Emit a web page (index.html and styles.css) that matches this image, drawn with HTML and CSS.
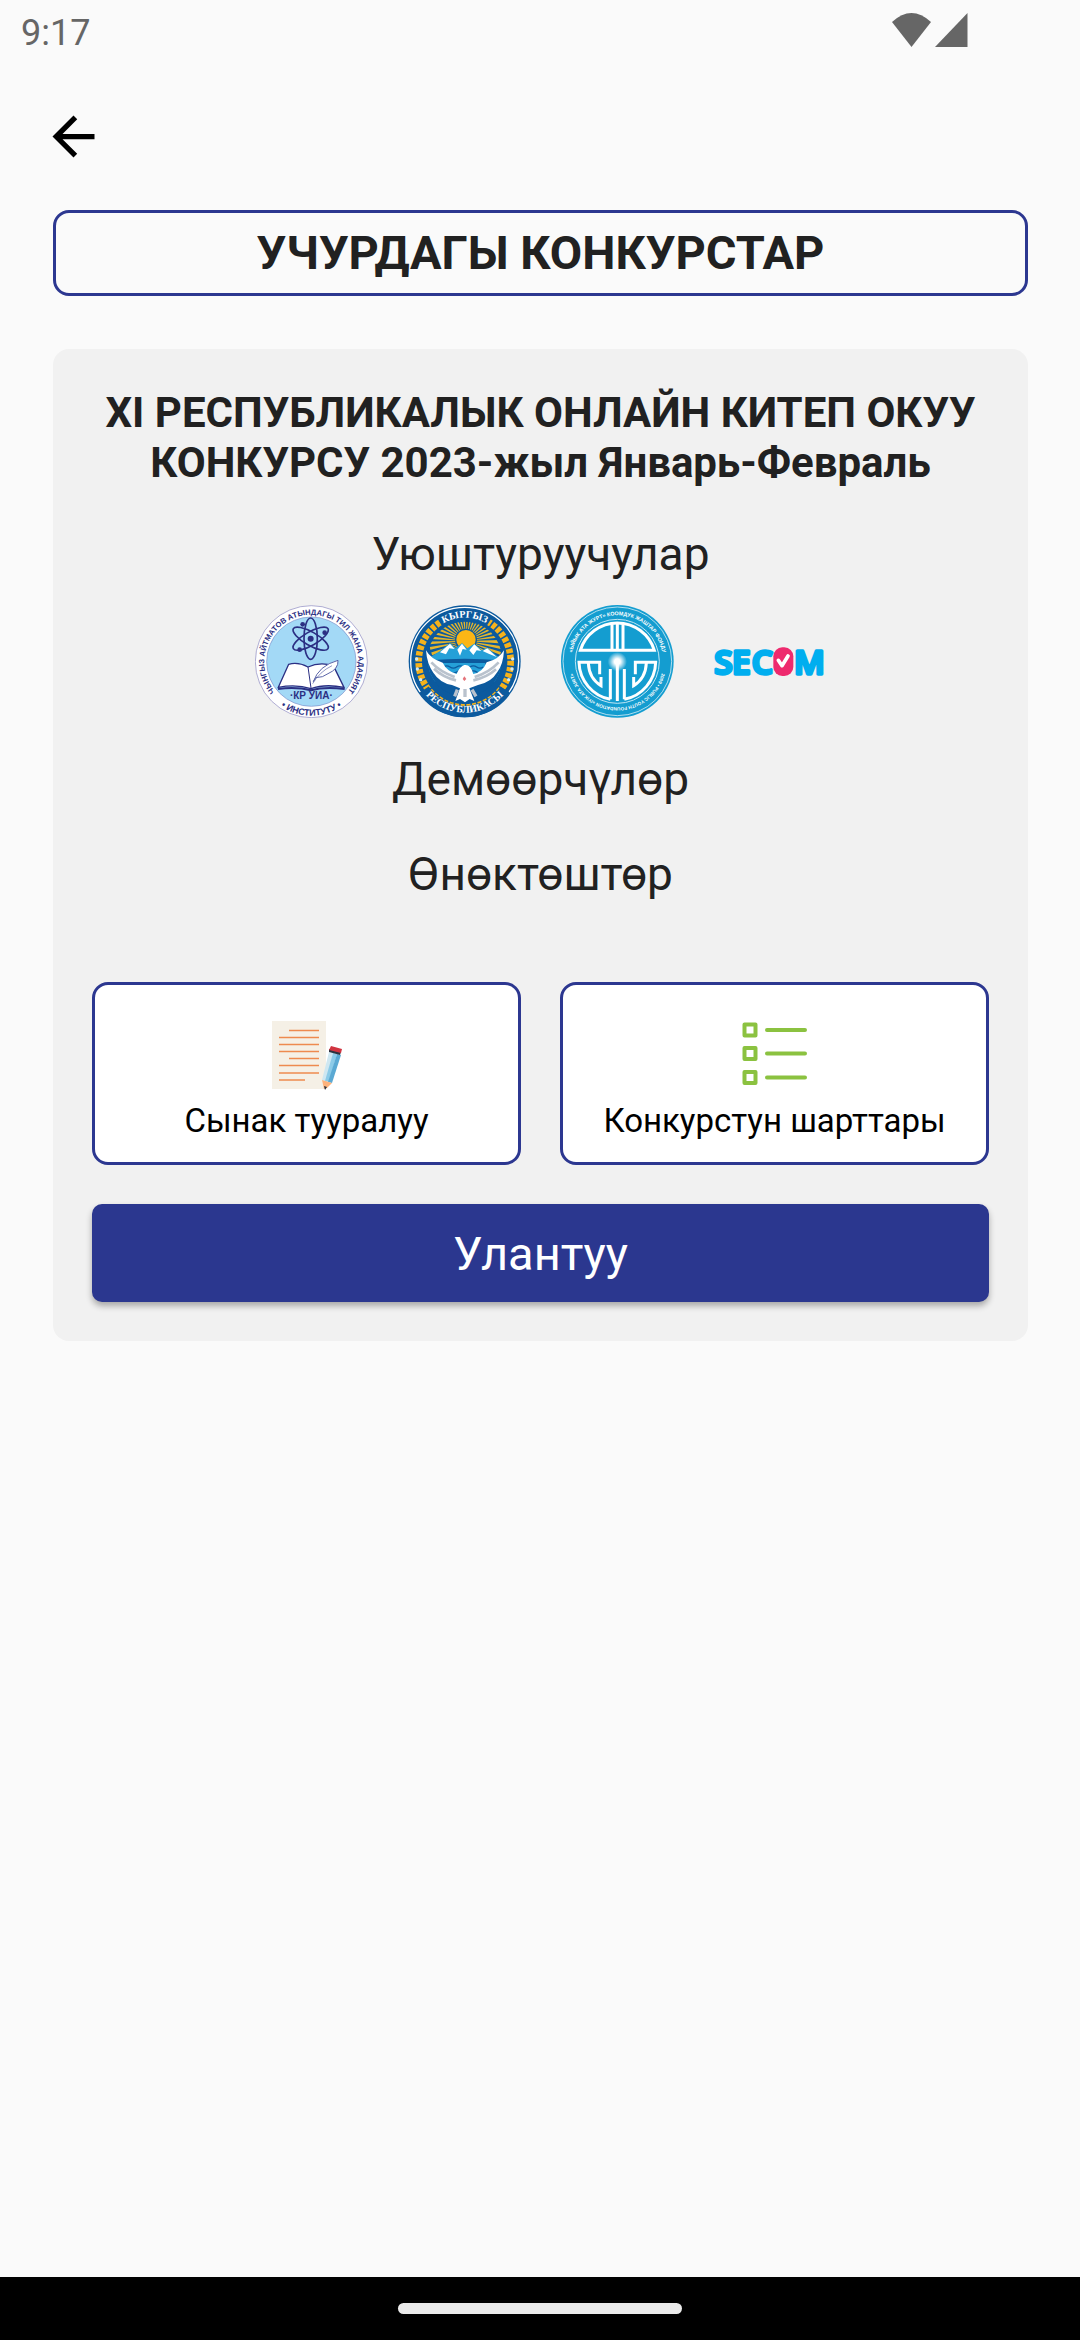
FILE: index.html
```html
<!DOCTYPE html>
<html lang="ky">
<head>
    <meta charset="UTF-8">
    <meta name="viewport" content="width=device-width, initial-scale=1.0">
    <title>Учурдагы конкурстар</title>
    <link rel="stylesheet" href="styles.css">
</head>
<body>
    <div class="status-bar">
        <span class="clock">9:17</span>
        <svg class="status-icons" viewBox="0 0 76 34" aria-hidden="true">
            <path d="M0 9 Q19.500 -9 39 9 L19.500 34 Z"/>
            <path d="M43 34 L75.500 0 V34 Z"/>
        </svg>
    </div>

    <header class="app-bar">
        <button class="back-button" type="button" aria-label="Артка">
            <svg viewBox="0 0 24 24"><path d="M20 11H7.830l5.590-5.590L12 4l-8 8 8 8 1.410-1.410L7.830 13H20v-2z"/></svg>
        </button>
    </header>

    <main class="content">
        <h1 class="page-title">УЧУРДАГЫ КОНКУРСТАР</h1>

        <section class="contest-card">
            <h2 class="contest-name">XI РЕСПУБЛИКАЛЫК ОНЛАЙН КИТЕП ОКУУ КОНКУРСУ 2023-жыл Январь-Февраль</h2>

            <h3 class="group-title">Уюштуруучулар</h3>
            <div class="logos">
                <!-- institute -->
                <svg class="logo" viewBox="31 30 339 339">
                    <defs>
                        <path id="inst-top" d="M92 291 A141 141 0 1 1 308 291"/>
                        <path id="inst-bottom" d="M86 315 A162 162 0 0 0 314 315"/>
                    </defs>
                    <circle cx="200" cy="200" r="168" fill="#fff" stroke="#8a86c0" stroke-width="2"/>
                    <circle cx="200" cy="200" r="134" fill="#a3d9f6" stroke="#7b8fca" stroke-width="2"/>
                    <g class="ring-text" fill="#2b2f83">
                        <text font-size="23"><textPath href="#inst-top" startOffset="50%" text-anchor="middle">ЧЫНГЫЗ АЙТМАТОВ АТЫНДАГЫ ТИЛ ЖАНА АДАБИЯТ</textPath></text>
                        <text font-size="27"><textPath href="#inst-bottom" startOffset="50%" text-anchor="middle">• ИНСТИТУТУ •</textPath></text>
                    </g>
                    <g fill="none" stroke="#2b2f83" stroke-width="5">
                        <ellipse cx="198" cy="131" rx="20" ry="62"/>
                        <ellipse cx="198" cy="131" rx="20" ry="60" transform="rotate(60 198 131)"/>
                        <ellipse cx="198" cy="131" rx="20" ry="60" transform="rotate(-60 198 131)"/>
                    </g>
                    <g fill="#2b2f83">
                        <circle cx="198" cy="131" r="9"/>
                        <circle cx="174" cy="88" r="7"/>
                        <circle cx="240" cy="113" r="7"/>
                        <circle cx="165" cy="164" r="7"/>
                    </g>
                    <path d="M101 277 L132 208 Q160 200 190 216 Q225 200 266 212 L298 277 Q240 266 199 281 Q155 267 101 277 Z" fill="#fff" stroke="#2b2f83" stroke-width="4"/>
                    <path d="M100 282 Q155 275 199 286 Q240 274 300 282" fill="none" stroke="#2b2f83" stroke-width="6"/>
                    <path d="M190 216 L199 279" stroke="#2b2f83" stroke-width="3"/>
                    <path d="M206 260 Q222 212 280 196 Q282 222 250 236 Q235 248 213 248 Z" fill="#fff" stroke="#5a64a8" stroke-width="3"/>
                    <path d="M204 266 Q225 230 262 212" fill="none" stroke="#5a64a8" stroke-width="2"/>
                    <text class="ring-text" x="200" y="313" fill="#2b2f83" font-size="30" text-anchor="middle">·КР УИА·</text>
                </svg>

                <!-- state emblem -->
                <svg class="logo" viewBox="34 30 339 339">
                    <defs>
                        <path id="emblem-top" d="M73 199 A131 131 0 0 1 335 199"/>
                        <path id="emblem-bottom" d="M50 199 A154 154 0 0 0 358 199"/>
                        <clipPath id="emblem-disc"><circle cx="204" cy="192" r="112"/></clipPath>
                    </defs>
                    <circle cx="204" cy="199" r="168" fill="#0c5a9e"/>
                    <circle cx="204" cy="199" r="162" fill="none" stroke="#fff" stroke-width="4"/>
                    <circle cx="204" cy="199" r="138" fill="none" stroke="#f6b21b" stroke-width="20" stroke-dasharray="13 5"/>
                    <path d="M130 80 A138 138 0 0 1 278 80" fill="none" stroke="#0c5a9e" stroke-width="30"/>
                    <path d="M82 284 A146 146 0 0 0 326 284" fill="none" stroke="#0c5a9e" stroke-width="34"/>
                    <g fill="#cfe9f8">
                        <circle cx="60" cy="192" r="5"/><circle cx="62" cy="222" r="5"/><circle cx="72" cy="254" r="5"/>
                        <circle cx="348" cy="192" r="5"/><circle cx="346" cy="222" r="5"/><circle cx="336" cy="254" r="5"/>
                    </g>
                    <g clip-path="url(#emblem-disc)">
                        <rect x="90" y="80" width="228" height="240" fill="#0c5a9e"/>
                        <circle cx="208" cy="138" r="66" fill="none" stroke="#e5b52b" stroke-width="88" stroke-dasharray="5 5"/>
                        <circle cx="208" cy="134" r="31" fill="#fbb615" stroke="#0c5a9e" stroke-width="4"/>
                        <path d="M96 190 L130 168 L160 144 L176 160 L196 144 L212 160 L232 146 L256 166 L272 158 L312 192 V260 H96 Z" fill="#25a0d8"/>
                        <path d="M130 172 L160 146 L174 162 L158 160 L148 178 Z M182 164 L196 146 L210 164 L198 162 L190 182 Z M218 166 L233 148 L254 168 L240 166 L230 180 Z M258 168 L272 160 L300 186 L276 176 Z" fill="#fff"/>
                        <path d="M96 196 Q205 186 312 196 V320 H96 Z" fill="#0c5a9e"/>
                        <path d="M136 204 H266 V256 H136 Z" fill="#25a0d8"/>
                        <path d="M140 216 q10 -7 20 0 t20 0 t20 0 t20 0 t20 0 t20 0 M140 231 q10 -7 20 0 t20 0 t20 0 t20 0 t20 0 t20 0" fill="none" stroke="#0c5a9e" stroke-width="4"/>
                    </g>
                    <path d="M88 166 Q91 208 110 233 Q130 264 166 270 L190 280 L176 318 L190 312 L205 322 L219 312 L233 318 L218 280 L244 270 Q284 262 302 231 Q320 208 322 166 Q306 194 270 202 Q258 232 230 237 Q222 207 203 210 Q188 216 180 237 Q150 228 138 203 Q102 192 88 166 Z" fill="#fff"/>
                    <path d="M104 202 Q130 230 174 246 M112 221 Q138 246 178 256 M306 202 Q278 232 234 246 M298 223 Q270 248 230 256" fill="none" stroke="#b9c2cd" stroke-width="8"/>
                    <path d="M182 284 L174 304 M226 284 L238 304 M205 282 V306" stroke="#b9c2cd" stroke-width="10"/>
                    <path d="M203 244 L209 252 L203 258 L198 252 Z" fill="#e5737a"/>
                    <g class="emblem-text" fill="#fff">
                        <text font-size="30"><textPath href="#emblem-top" startOffset="50%" text-anchor="middle">КЫРГЫЗ</textPath></text>
                        <text font-size="30"><textPath href="#emblem-bottom" startOffset="50%" text-anchor="middle">РЕСПУБЛИКАСЫ</textPath></text>
                    </g>
                </svg>

                <!-- youth foundation -->
                <svg class="logo" viewBox="30 30 339 339">
                    <defs>
                        <path id="fund-top" d="M61 199 A138 138 0 0 1 337 199"/>
                        <path id="fund-bottom" d="M337 199 A138 138 0 0 1 61 199"/>
                        <radialGradient id="fund-glow">
                            <stop offset="0.300" stop-color="#fff"/>
                            <stop offset="1" stop-color="#fff" stop-opacity="0"/>
                        </radialGradient>
                    </defs>
                    <circle cx="199" cy="199" r="169" fill="#149dd0"/>
                    <circle cx="199" cy="199" r="163" fill="none" stroke="#fff" stroke-width="2"/>
                    <circle cx="199" cy="199" r="126" fill="none" stroke="#bfe6f5" stroke-width="3"/>
                    <g class="ring-text" fill="#fff">
                        <text font-size="16"><textPath href="#fund-top" startOffset="50%" text-anchor="middle">«ЫЙЫК АТА ЖУРТ» КООМДУК ЖАШТАР ФОНДУ</textPath></text>
                        <text font-size="14"><textPath href="#fund-bottom" startOffset="50%" text-anchor="middle">2009 • PUBLIC YOUTH FOUNDATION «IYIK ATA JURT»</textPath></text>
                    </g>
                    <g fill="none" stroke="#fff" stroke-width="9">
                        <path d="M88 166 A116 116 0 0 1 310 166 Z"/>
                        <path d="M183 88 V166 M199 86 V166 M216 88 V166"/>
                        <path d="M178 313 A116 116 0 0 1 84 202 H146 V238"/>
                        <path d="M220 313 A116 116 0 0 0 314 202 H253 V238"/>
                        <path d="M178 222 V313 M199 200 V318 M220 222 V313"/>
                        <path d="M112 204 Q114 250 150 272 V246 M286 204 Q284 250 248 272 V246"/>
                    </g>
                    <circle cx="199" cy="200" r="29" fill="url(#fund-glow)"/>
                </svg>

                <!-- SECOM -->
                <svg class="logo" viewBox="36 -45 339 339">
                    <g class="secom-text" fill="#00aeef" stroke="#00aeef" stroke-width="10" stroke-linejoin="round">
                        <text x="37" y="161">S</text>
                        <text x="90" y="161">E</text>
                        <text x="149" y="161">C</text>
                        <text x="276" y="161">M</text>
                    </g>
                    <rect x="214" y="82" width="60" height="86" rx="27" fill="#ee2a6e"/>
                    <path d="M229 121 L240 137 L258 108" fill="none" stroke="#fff" stroke-width="11" stroke-linecap="round" stroke-linejoin="round"/>
                </svg>
            </div>

            <h3 class="group-title">Демөөрчүлөр</h3>
            <h3 class="group-title">Өнөктөштөр</h3>

            <div class="actions">
                <button class="info-button" type="button">
                    <svg class="info-icon" viewBox="0 0 80 80">
                        <rect x="5" y="6" width="54" height="68" fill="#f5f0e6"/>
                        <path d="M22 15.500h30M12 22.500h40M12 29.500h40M12 36.500h40M22 43.500h30M12 50.500h40M12 58h40M12 65h26" stroke="#ee8a4f" stroke-width="1.500"/>
                        <path d="M62 37 L66 38 L60 67 L55 65 Z" fill="#cfe7f1"/>
                        <path d="M66 38 L70 39 L62 67 L58 66 Z" fill="#8ccbe8"/>
                        <path d="M70 39 L74 40 L65 68 L61 67 Z" fill="#5aa9d3"/>
                        <path d="M55 65 L65 68 L60 73 L57 74 Z" fill="#fdb27c"/>
                        <path d="M57 71 L60 72 L58 75 Z" fill="#2b3440"/>
                        <path d="M62 34 L74 37 L73 40 L62 37 Z" fill="#2b3440"/>
                        <path d="M64 31 L75 34 L74 38 L62 35 Z" fill="#d13440"/>
                    </svg>
                    <span>Сынак тууралуу</span>
                </button>
                <button class="info-button" type="button">
                    <svg class="info-icon" viewBox="0 0 80 80">
                        <g fill="none" stroke="#8bc240" stroke-linejoin="round">
                            <path d="M9.500 9.500h11v11h-11zM9.500 33h11v11h-11zM9.500 57h11v11h-11z" stroke-width="4"/>
                            <path d="M32 15h38M32 38.500h38M32 62.500h38" stroke-width="4" stroke-linecap="round"/>
                        </g>
                    </svg>
                    <span>Конкурстун шарттары</span>
                </button>
            </div>

            <button class="continue-button" type="button">Улантуу</button>
        </section>
    </main>

    <footer class="nav-bar">
        <div class="nav-handle"></div>
    </footer>
</body>
</html>
```
FILE: styles.css
```css
* {
  box-sizing: border-box;
}

body {
  display: flex;
  flex-direction: column;
  min-height: 100vh;
  margin: 0;
  background-color: #fafafa;
  color: #212121;
  font-family: Roboto, "Noto Sans", sans-serif;
}

h1, h2, h3 {
  margin: 0;
}

button {
  border: none;
  padding: 0;
  font-family: inherit;
  cursor: pointer;
}

.status-bar {
  display: flex;
  align-items: flex-start;
  justify-content: space-between;
  height: 62px;
  padding: 13px 112px 0 21px;
}

.clock {
  color: #666;
  font-size: 36px;
  line-height: 40px;
}

.status-icons {
  width: 76px;
  height: 34px;
  fill: #666;
}

.app-bar {
  height: 148px;
  padding: 43px 42px;
}

.back-button {
  display: block;
  width: 63px;
  height: 63px;
  background: none;
}

.back-button svg {
  display: block;
}

.content {
  flex: 1;
  padding: 0 52px 52px 53px;
}

.page-title {
  margin-bottom: 53px;
  padding: 12px;
  border: 3px solid #2c3790;
  border-radius: 16px;
  font-size: 47px;
  font-weight: 700;
  line-height: 56px;
  text-align: center;
}

.contest-card {
  padding: 39px;
  background-color: #f1f1f1;
  border-radius: 16px;
  text-align: center;
}

.contest-name {
  margin-bottom: 38px;
  font-size: 42px;
  font-weight: 700;
  line-height: 50px;
}

.group-title {
  margin-bottom: 39px;
  font-size: 46px;
  font-weight: 400;
  line-height: 56px;
}

.logos {
  display: flex;
  justify-content: center;
  gap: 40px;
  margin: -16px 0 33px;
}

.logo {
  width: 113px;
  height: 113px;
}

.ring-text {
  font-family: "Liberation Sans", Arial, sans-serif;
  font-weight: 700;
}

.emblem-text {
  font-family: "Liberation Serif", "Times New Roman", serif;
  font-weight: 700;
}

.secom-text {
  font-family: "Open Sans", sans-serif;
  font-size: 100px;
  font-weight: 600;
}

.actions {
  display: grid;
  grid-template-columns: 1fr 1fr;
  gap: 39px;
  margin: 80px 0 39px;
}

.info-button {
  display: flex;
  flex-direction: column;
  align-items: center;
  padding: 30px 10px 15px;
  background-color: #fff;
  border: 3px solid #2c3790;
  border-radius: 16px;
  color: #000;
  font-size: 33px;
  line-height: 52px;
}

.info-icon {
  width: 80px;
  height: 80px;
}

.continue-button {
  display: block;
  width: 100%;
  height: 98px;
  background-color: #2b378f;
  border-radius: 10px;
  box-shadow: 0 4px 6px rgba(0, 0, 0, 0.3);
  color: #fff;
  font-size: 47px;
}

.nav-bar {
  display: flex;
  align-items: center;
  justify-content: center;
  height: 63px;
  background-color: #000;
}

.nav-handle {
  width: 284px;
  height: 11px;
  background-color: #ebebeb;
  border-radius: 6px;
}
```
